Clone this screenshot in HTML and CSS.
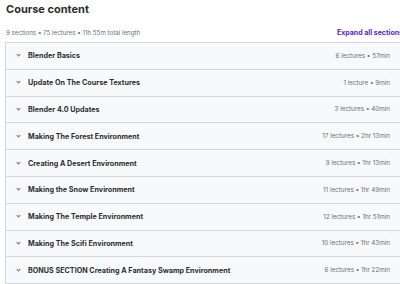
FILE: index.html
```html
<!DOCTYPE html>
<html lang="en">
<head>
  <meta charset="UTF-8" />
  <title>Course content</title>
  <link rel="stylesheet" href="styles.css">
</head>
<body>
<div class="curriculum">
  <h2 class="title">Course content</h2>
  <div class="summary">
    <span>9 sections • 75 lectures • 11h 55m total length</span>
    <button class="expand-btn">Expand all sections</button>
  </div>
  <div class="sections">
    <div class="section"><span class="chev"></span><span class="name">Blender Basics</span><span class="meta">6 lectures • 57min</span></div>
    <div class="section"><span class="chev"></span><span class="name">Update On The Course Textures</span><span class="meta">1 lecture • 9min</span></div>
    <div class="section"><span class="chev"></span><span class="name">Blender 4.0 Updates</span><span class="meta">3 lectures • 40min</span></div>
    <div class="section"><span class="chev"></span><span class="name">Making The Forest Environment</span><span class="meta">17 lectures • 2hr 13min</span></div>
    <div class="section"><span class="chev"></span><span class="name">Creating A Desert Environment</span><span class="meta">9 lectures • 1hr 13min</span></div>
    <div class="section"><span class="chev"></span><span class="name">Making the Snow Environment</span><span class="meta">11 lectures • 1hr 49min</span></div>
    <div class="section"><span class="chev"></span><span class="name">Making The Temple Environment</span><span class="meta">12 lectures • 1hr 51min</span></div>
    <div class="section"><span class="chev"></span><span class="name">Making The Scifi Environment</span><span class="meta">10 lectures • 1hr 43min</span></div>
    <div class="section"><span class="chev"></span><span class="name">BONUS SECTION Creating A Fantasy Swamp Environment</span><span class="meta">6 lectures • 1hr 22min</span></div>
  </div>
</div>
</body>
</html>
```

FILE: styles.css
```css
* {
  box-sizing: border-box;
}

body {
  margin: 0;
  font-family: Inter, sans-serif;
  color: #2d2f31;
  background: #fff;
  overflow: hidden;
}

.curriculum {
  padding-left: 5px;
  width: 410px;
}

.title {
  margin: 0;
  padding: 1px 0 0 1px;
  font-size: 11px;
  font-weight: 700;
  line-height: 16px;
}

.summary {
  display: flex;
  justify-content: space-between;
  align-items: center;
  margin-top: 8px;
  height: 14px;
  font-size: 6.2px;
  color: #6a6f73;
  padding-left: 1px;
}

.expand-btn {
  border: none;
  background: none;
  padding: 0;
  font-family: inherit;
  font-size: 7px;
  font-weight: 700;
  color: #5624d0;
  margin-right: 7px;
}

.sections {
  border: 1px solid #d1d7dc;
  border-right: none;
  margin-top: 3px;
}

.section {
  display: flex;
  align-items: center;
  height: 26.8px;
  background: #f7f9fa;
  border-bottom: 1px solid #d1d7dc;
  padding: 0 20px 0 11px;
  font-size: 7.2px;
}

.chev {
  width: 3px;
  height: 3px;
  border-right: 1px solid #6a6f73;
  border-bottom: 1px solid #6a6f73;
  transform: rotate(45deg);
  margin: -2px 8px 0 0;
}

.name {
  flex: 1;
  font-weight: 700;
}

.meta {
  font-size: 6.3px;
  color: #6a6f73;
}
```
